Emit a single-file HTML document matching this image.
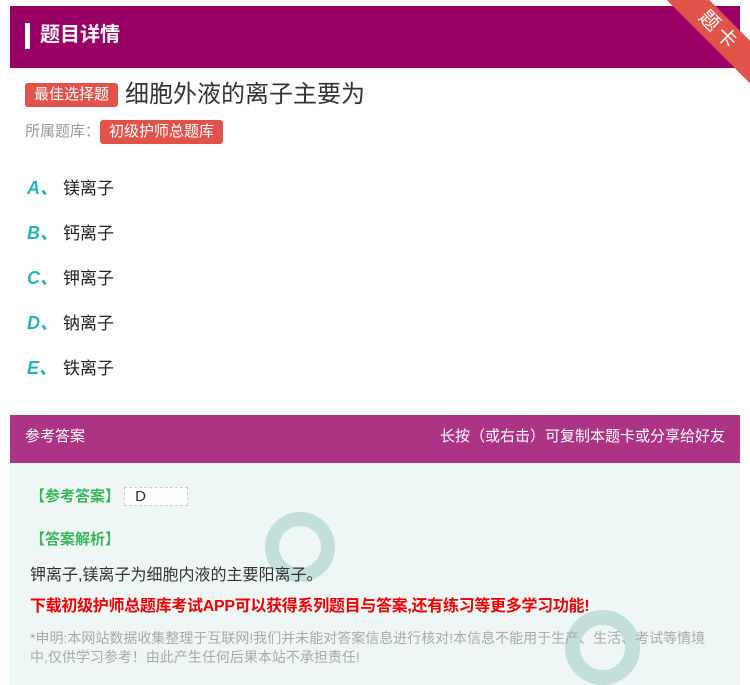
<!DOCTYPE html><html><head><meta charset="utf-8"><style>
body{margin:0;width:750px;height:685px;background:#fff;font-family:"Liberation Sans","Noto Sans CJK SC",sans-serif;position:relative;overflow:hidden}
.hd{position:absolute;left:10px;top:6px;width:730px;height:62px;background:#990066;color:#fff;font-size:20px;font-weight:bold;line-height:58px}
.hd i{position:absolute;left:15px;top:17px;width:5px;height:26px;background:#fff}
.hd span{position:absolute;left:30px}
.rib{position:absolute;right:-34px;top:16px;width:130px;height:30px;background:#e0524a;color:#fff;transform:rotate(45deg);text-align:center;font-size:20px;line-height:30px;letter-spacing:4px}
.tag{display:inline-block;background:#e0524a;color:#fff;border-radius:3px;font-size:15px;padding:0 8px;line-height:24px}
.opt{position:absolute;left:27px;font-size:17px;color:#222}
.opt b{color:#26b5b5;font-style:italic;font-size:18px;display:inline-block;width:36px}
.ans{position:absolute;left:10px;top:415px;width:730px;height:270px;background:#eff7f6}
.ah{height:48px;background:#ad3384;color:#fff;font-size:15px;line-height:44px}
</style></head><body>
<div class="hd"><i></i><span>题目详情</span></div>
<div class="rib">题卡</div>
<div style="position:absolute;left:25px;top:80px;font-size:24px;color:#333;line-height:30px;white-space:nowrap"><span class="tag" style="vertical-align:3px;font-size:15px;padding:0 9px">最佳选择题</span><span style="margin-left:7px">细胞外液的离子主要为</span></div>
<div style="position:absolute;left:25px;top:120px;font-size:15px;color:#999;line-height:24px">所属题库：<span class="tag" style="padding:0 9px">初级护师总题库</span></div>
<div class="opt" style="top:174px"><b>A、</b>镁离子</div>
<div class="opt" style="top:219px"><b>B、</b>钙离子</div>
<div class="opt" style="top:264px"><b>C、</b>钾离子</div>
<div class="opt" style="top:309px"><b>D、</b>钠离子</div>
<div class="opt" style="top:354px"><b>E、</b>铁离子</div>
<div class="ans"><div class="ah"><span style="margin-left:15px">参考答案</span><span style="float:right;margin-right:15px">长按（或右击）可复制本题卡或分享给好友</span></div>
<div style="position:absolute;left:255px;top:97px;width:70px;height:70px;border-radius:50%;border:14px solid #b8d8d2;box-sizing:border-box;opacity:.8"></div>
<div style="position:absolute;left:555px;top:195px;width:75px;height:75px;border-radius:50%;border:15px solid #b8d8d2;box-sizing:border-box;opacity:.8"></div>
<div style="position:absolute;left:20px;top:70px;color:#3cb55a;font-weight:bold;font-size:15px">【参考答案】 <span style="display:inline-block;background:#fff;color:#333;font-weight:normal;width:52px;padding-left:10px;border:1px dashed #ccc">D</span></div>
<div style="position:absolute;left:20px;top:113px;color:#3cb55a;font-weight:bold;font-size:15px">【答案解析】</div>
<div style="position:absolute;left:20px;top:146px;color:#333;font-size:16px">钾离子,镁离子为细胞内液的主要阳离子。</div>
<div style="position:absolute;left:20px;top:177px;color:#e00;font-weight:bold;font-size:16px;letter-spacing:-0.3px;white-space:nowrap">下载初级护师总题库考试APP可以获得系列题目与答案,还有练习等更多学习功能!</div>
<div style="position:absolute;left:20px;top:214px;width:690px;color:#aaa;font-size:14px;line-height:19px">*申明:本网站数据收集整理于互联网!我们并未能对答案信息进行核对!本信息不能用于生产、生活、考试等情境中,仅供学习参考！由此产生任何后果本站不承担责任!</div>
</div>
</body></html>
